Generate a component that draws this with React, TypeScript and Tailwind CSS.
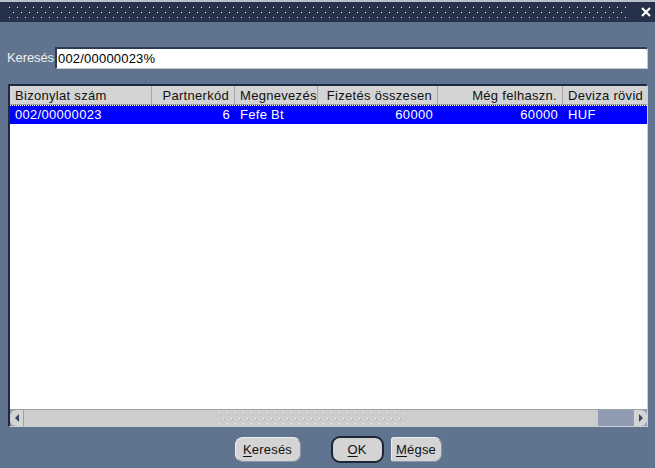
import React from "react";

const cols = [
  { label: "Bizonylat szám", w: 142, align: "left" as const, val: "002/00000023" },
  { label: "Partnerkód", w: 83, align: "right" as const, val: "6" },
  { label: "Megnevezés", w: 83, align: "left" as const, val: "Fefe Bt" },
  { label: "Fizetés összesen", w: 120, align: "right" as const, val: "60000" },
  { label: "Még felhaszn.", w: 125, align: "right" as const, val: "60000" },
  { label: "Deviza rövid n", w: 90, align: "left" as const, val: "HUF" },
];

function Dots({ light = true }: { light?: boolean }) {
  return (
    <svg width="100%" height="12" className="block">
      <defs>
        <pattern id={light ? "dl" : "dd"} width="8" height="10" patternUnits="userSpaceOnUse">
          <rect x="1" y="1" width="1" height="1" fill={light ? "#ffffff" : "#f4f4f4"} />
          <rect x="2" y="2" width="1" height="1" fill={light ? "#10192a" : "#9a9a9a"} />
          <rect x="5" y="6" width="1" height="1" fill={light ? "#ffffff" : "#f4f4f4"} />
          <rect x="6" y="7" width="1" height="1" fill={light ? "#10192a" : "#9a9a9a"} />
        </pattern>
      </defs>
      <rect width="100%" height="12" fill={`url(#${light ? "dl" : "dd"})`} />
    </svg>
  );
}

export default function App() {
  return (
    <div
      className="w-[655px] h-[468px] bg-[#61748f] flex flex-col text-[13px] text-black overflow-hidden"
      style={{ fontFamily: '"Liberation Sans", Arial, sans-serif' }}
    >
      <div className="h-[22px] bg-[#26324a] border-t-[2px] border-[#b8c0cc] flex items-center pl-[8px] pr-[3px]">
        <div className="flex-1 mr-[14px]">
          <Dots />
        </div>
        <svg width="12" height="12" viewBox="0 0 12 12">
          <path d="M2 2 L10 10 M10 2 L2 10" stroke="#ffffff" strokeWidth="2.2" />
        </svg>
      </div>

      <div className="px-[7px] flex flex-col">
        <div className="mt-[25px] flex items-center h-[22px]">
          <span className="text-[#f0f0f0] mr-[1px] tracking-[-0.1px]">Keresés</span>
          <div className="flex-1 h-[22px] bg-white border-t-[2px] border-l-[2px] border-[#2c3a52] border-b border-r border-b-[#c0c8d4] border-r-[#c0c8d4] rounded-tr-[3px] flex items-center pl-[1px] tracking-[0.2px]">
            002/00000023%
          </div>
        </div>

        <div className="mt-[15px] ml-[1px] h-[343px] bg-white border-t-[2px] border-l-[2px] border-[#1e2a40] border-r border-b border-r-[#c8d0dc] border-b-[#c8d0dc] rounded-tr-[3px] flex flex-col overflow-hidden">
          <div className="flex h-[19px] bg-[#d4d4d4] border-b border-[#9aa0a8] whitespace-nowrap overflow-hidden tracking-[0.3px]">
            {cols.map((c, i) => (
              <div
                key={i}
                style={{ width: c.w, textAlign: c.align }}
                className={`shrink-0 px-[5px] leading-[19px] text-[#111] overflow-hidden ${i < cols.length - 1 ? "border-r border-[#a6a6a6]" : ""}`}
              >
                {c.label}
              </div>
            ))}
          </div>
          <div className="flex h-[19px] bg-[#0000ff] text-white border-t border-dotted border-white whitespace-nowrap overflow-hidden tracking-[0.3px]">
            {cols.map((c, i) => (
              <div
                key={i}
                style={{ width: c.w, textAlign: c.align }}
                className="shrink-0 px-[5px] leading-[17px] overflow-hidden"
              >
                {c.val}
              </div>
            ))}
          </div>
          <div className="flex-1" />
          <div className="h-[17px] flex items-stretch border-t border-[#9aa0a8] bg-[#8e9bb0]">
            <div className="w-[14px] bg-[#d4d4d4] rounded-l-[6px] flex items-center justify-center border-r border-[#a0a0a0]">
              <svg width="6" height="8" viewBox="0 0 6 8"><path d="M5 0 L1 4 L5 8 Z" fill="#3a4660" /></svg>
            </div>
            <div className="w-[574px] bg-[#cdcdcd] flex items-center justify-center">
              <div className="w-[186px]"><Dots light={false} /></div>
            </div>
            <div className="flex-1" />
            <div className="w-[14px] bg-[#d4d4d4] rounded-r-[6px] flex items-center justify-center border-l border-[#a0a0a0]">
              <svg width="6" height="8" viewBox="0 0 6 8"><path d="M1 0 L5 4 L1 8 Z" fill="#3a4660" /></svg>
            </div>
          </div>
        </div>

        <div className="mt-[9px] flex items-center justify-center pl-[21px]">
          <button className="w-[66px] h-[25px] bg-[#d4d4d4] rounded-[8px] border border-[#eeeeee] border-b-[#8a96a8] border-r-[#8a96a8] text-[#111] tracking-[0.2px]">
            <span className="underline underline-offset-2">K</span>eresés
          </button>
          <button className="ml-[30px] w-[53px] h-[27px] bg-[#d4d4d4] rounded-[9px] border-[2px] border-[#1c2538] text-[#111]">
            <span className="underline underline-offset-2">O</span>K
          </button>
          <button className="ml-[7px] w-[51px] h-[25px] bg-[#d4d4d4] rounded-[8px] rounded-l-[3px] border border-[#eeeeee] border-b-[#8a96a8] border-r-[#8a96a8] text-[#111] tracking-[0.2px]">
            <span className="underline underline-offset-2">M</span>égse
          </button>
        </div>
      </div>
    </div>
  );
}
